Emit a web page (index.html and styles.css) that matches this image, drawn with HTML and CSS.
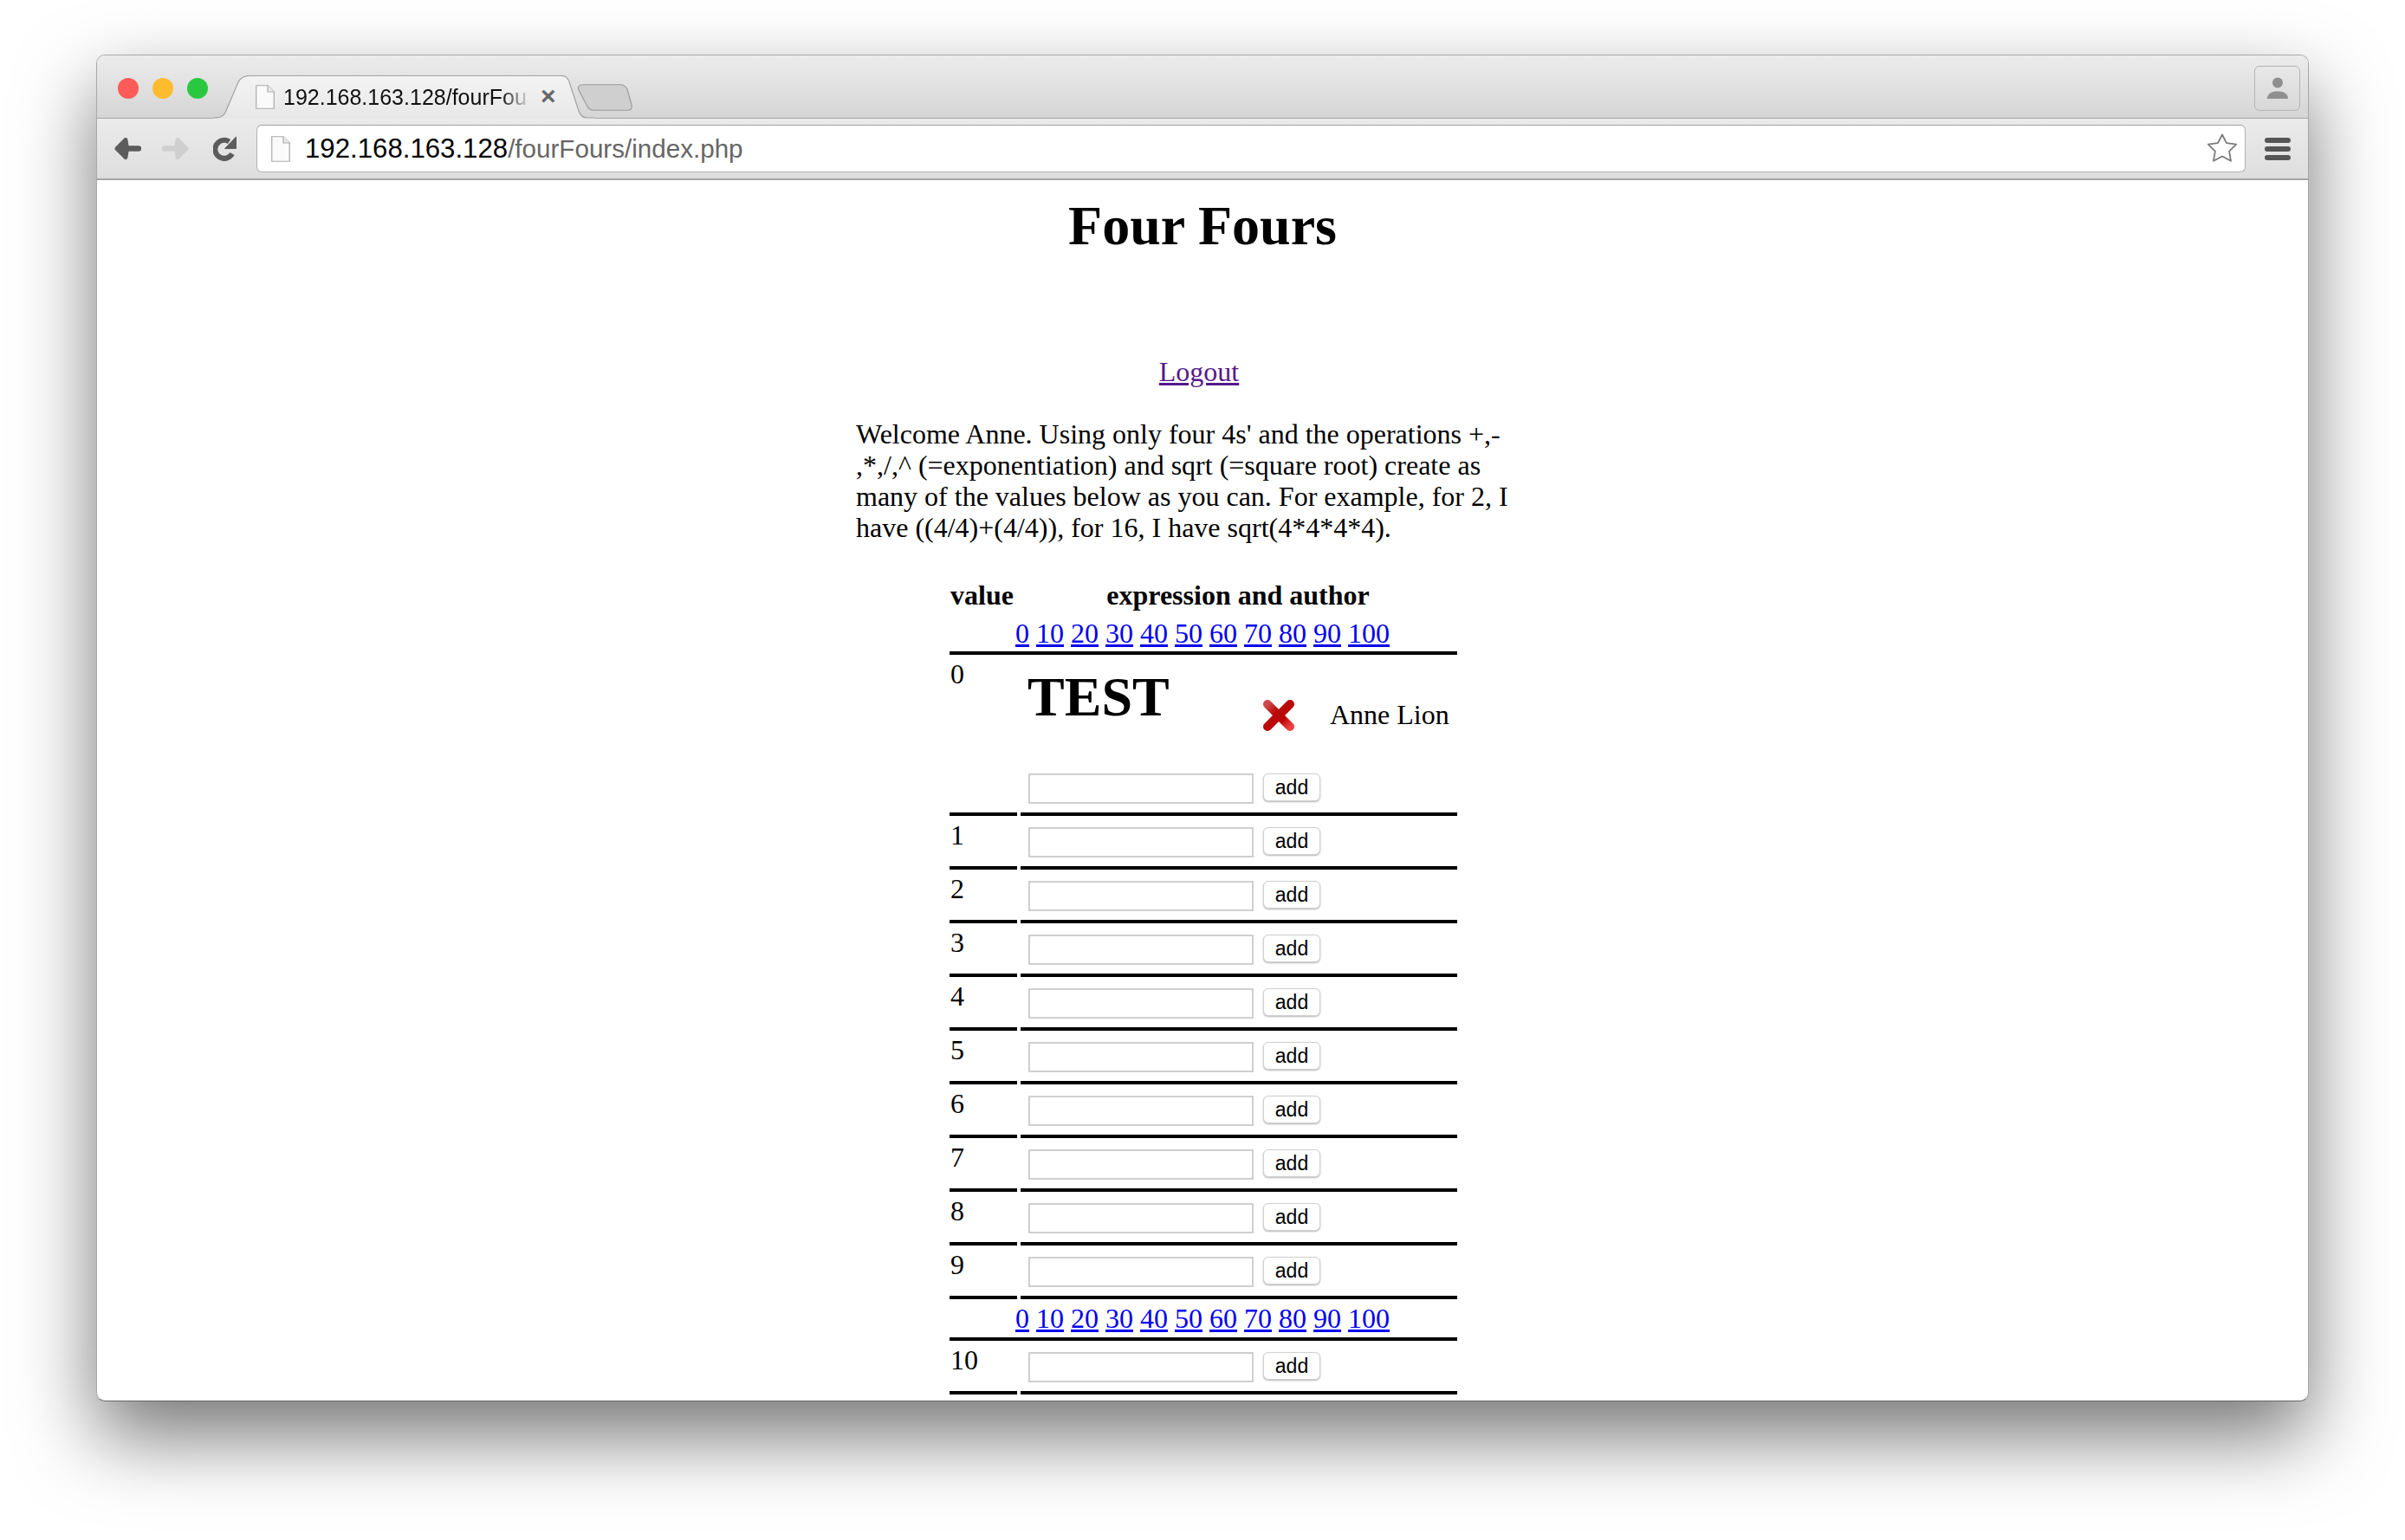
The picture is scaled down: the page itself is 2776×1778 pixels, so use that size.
FILE: index.html
```html
<!DOCTYPE html>
<html lang="en">
<head>
  <meta charset="UTF-8">
  <title>Four Fours</title>
  <link rel="stylesheet" href="styles.css">
</head>
<body>

<div class="window">

  <!-- Tab strip -->
  <div class="tabstrip">
    <div class="lights">
      <span class="light light-red"></span>
      <span class="light light-yellow"></span>
      <span class="light light-green"></span>
    </div>
    <div class="tab">
      <svg class="tab-shape" width="440" height="50" viewBox="0 0 440 50">
        <defs>
          <linearGradient id="tabFill" x1="0" y1="0" x2="0" y2="1">
            <stop offset="0" stop-color="#f3f3f3"/>
            <stop offset="1" stop-color="#e8e8e8"/>
          </linearGradient>
        </defs>
        <path d="M0 49C9 49 12 47 14 43L29 8C32 2 36 .5 42 .5L402 .5C407 .5 410 3 411.500 9L422 41C424 47 427 49 432 49L440 49L440 50L0 50Z" fill="url(#tabFill)"/>
        <path d="M0 49C9 49 12 47 14 43L29 8C32 2 36 .5 42 .5L402 .5C407 .5 410 3 411.500 9L422 41C424 47 427 49 432 49L440 49" fill="none" stroke="#a2a2a2" stroke-width="1.200"/>
      </svg>
      <svg class="page-icon" width="22" height="28" viewBox="0 0 22 28">
        <path d="M.75.75H14L21.25 8V27.25H.75Z" fill="#fafafa" stroke="#aaa" stroke-width="1.200"/>
        <path d="M14 .75V8H21.25" fill="#ececec" stroke="#aaa" stroke-width="1.200"/>
      </svg>
      <span class="tab-title">192.168.163.128/fourFou</span>
      <span class="tab-close">&#215;</span>
    </div>
    <svg class="new-tab" width="64" height="31" viewBox="0 0 64 31">
      <path d="M7 .75H50C54 .75 56 2 58 6L63 24C64 28 62 30.250 59 30.250H19C15 30.250 13 28 11.500 25L2 7C.5 3 2.500 .75 7 .75Z" fill="#cfcfcf" stroke="#9c9c9c" stroke-width="1.200"/>
    </svg>
    <div class="profile">
      <svg width="26" height="26" viewBox="0 0 26 26">
        <circle cx="13" cy="6.500" r="6" fill="#8f8f8f"/>
        <path d="M1 25C1 19 6 16.500 13 16.500C20 16.500 25 19 25 25Z" fill="#8f8f8f"/>
      </svg>
    </div>
  </div>

  <!-- Toolbar -->
  <div class="toolbar">
    <svg class="nav-icon" width="31" height="27" viewBox="0 0 31 27">
      <path d="M13 3.500L3 13.500L13 23.500L14.500 13.500Z" fill="#5c5c5c" stroke="#5c5c5c" stroke-width="5" stroke-linejoin="round"/>
      <path d="M10 13.500H28" fill="none" stroke="#5c5c5c" stroke-width="6.500" stroke-linecap="round"/>
    </svg>
    <svg class="nav-icon fwd" width="31" height="27" viewBox="0 0 31 27">
      <path d="M18 3.500L28 13.500L18 23.500L16.500 13.500Z" fill="#cfcfcf" stroke="#cfcfcf" stroke-width="5" stroke-linejoin="round"/>
      <path d="M21 13.500H3" fill="none" stroke="#cfcfcf" stroke-width="6.500" stroke-linecap="round"/>
    </svg>
    <svg class="nav-icon reload" width="27" height="29" viewBox="0 0 27 29">
      <path d="M22 20.500A10.500 10.500 0 1 1 18.500 6.500" fill="none" stroke="#5c5c5c" stroke-width="6" stroke-linecap="butt"/>
      <path d="M13.500 14.500H26.500V1Z" fill="#5c5c5c" stroke="#5c5c5c" stroke-width="1" stroke-linejoin="round"/>
    </svg>
    <div class="omnibox">
      <svg class="page-icon" width="22" height="30" viewBox="0 0 22 30">
        <path d="M.75.75H14L21.25 8V29.25H.75Z" fill="#fafafa" stroke="#aaa" stroke-width="1.200"/>
        <path d="M14 .75V8H21.25" fill="#ececec" stroke="#aaa" stroke-width="1.200"/>
      </svg>
      <span class="url"><span class="url-host">192.168.163.128</span>/fourFours/index.php</span>
      <svg class="star" width="36" height="36" viewBox="0 0 36 36">
        <path d="M18 1.500L23 11.100L34.200 12.700L26.100 20.600L28 31.800L18 26.500L8 31.800L9.900 20.600L1.800 12.700L13 11.100Z" fill="#fff" stroke="#7a7a7a" stroke-width="1.800" stroke-linejoin="round"/>
      </svg>
    </div>
    <div class="menu-icon"><span></span><span></span><span></span></div>
  </div>

  <!-- Page content -->
  <div class="page">
    <h1>Four Fours</h1>
    <p class="logout"><a href="#" class="visited">Logout</a></p>
    <p class="intro">Welcome Anne. Using only four 4s' and the operations +,-<wbr>,*,/,^ (=exponentiation) and sqrt (=square root) create as many of the values below as you can. For example, for 2, I have ((4/4)+(4/4)), for 16, I have sqrt(4*4*4*4).</p>

    <table class="scores">
      <colgroup>
        <col class="col-value">
        <col class="col-expr">
      </colgroup>
      <thead>
        <tr>
          <th class="head-value">value</th>
          <th class="head-expr">expression and author</th>
        </tr>
      </thead>
      <tbody>
        <tr>
          <td colspan="2" class="jump jump-top"><a href="#">0</a> <a href="#">10</a> <a href="#">20</a> <a href="#">30</a> <a href="#">40</a> <a href="#">50</a> <a href="#">60</a> <a href="#">70</a> <a href="#">80</a> <a href="#">90</a> <a href="#">100</a></td>
        </tr>
        <tr>
          <td class="num num-first">0</td>
          <td class="expr">
            <div class="entry">
              <h1 class="entry-text">TEST</h1>
              <svg class="del-icon" width="36" height="36" viewBox="0 0 36 36">
                <defs>
                  <linearGradient id="delFill" x1="0" y1="0" x2="1" y2="1">
                    <stop offset="0" stop-color="#cf4a4a"/>
                    <stop offset=".35" stop-color="#b80a0a"/>
                    <stop offset=".7" stop-color="#bb0505"/>
                    <stop offset="1" stop-color="#ec4040"/>
                  </linearGradient>
                </defs>
                <path d="M5 5L31 31M31 5L5 31" fill="none" stroke="url(#delFill)" stroke-width="10" stroke-linecap="round"/>
              </svg>
              <span class="author">Anne Lion</span>
            </div>
            <div class="add-form"><input type="text"><button>add</button></div>
          </td>
        </tr>
        <tr><td class="num">1</td><td class="expr"><div class="add-form"><input type="text"><button>add</button></div></td></tr>
        <tr><td class="num">2</td><td class="expr"><div class="add-form"><input type="text"><button>add</button></div></td></tr>
        <tr><td class="num">3</td><td class="expr"><div class="add-form"><input type="text"><button>add</button></div></td></tr>
        <tr><td class="num">4</td><td class="expr"><div class="add-form"><input type="text"><button>add</button></div></td></tr>
        <tr><td class="num">5</td><td class="expr"><div class="add-form"><input type="text"><button>add</button></div></td></tr>
        <tr><td class="num">6</td><td class="expr"><div class="add-form"><input type="text"><button>add</button></div></td></tr>
        <tr><td class="num">7</td><td class="expr"><div class="add-form"><input type="text"><button>add</button></div></td></tr>
        <tr><td class="num">8</td><td class="expr"><div class="add-form"><input type="text"><button>add</button></div></td></tr>
        <tr><td class="num">9</td><td class="expr"><div class="add-form"><input type="text"><button>add</button></div></td></tr>
        <tr>
          <td colspan="2" class="jump"><a href="#">0</a> <a href="#">10</a> <a href="#">20</a> <a href="#">30</a> <a href="#">40</a> <a href="#">50</a> <a href="#">60</a> <a href="#">70</a> <a href="#">80</a> <a href="#">90</a> <a href="#">100</a></td>
        </tr>
        <tr><td class="num">10</td><td class="expr"><div class="add-form"><input type="text"><button>add</button></div></td></tr>
      </tbody>
    </table>
  </div>
</div>

</body>
</html>
```

FILE: styles.css
```css
html, body {
  margin: 0;
  padding: 0;
  height: 100%;
  background-color: #fff;
  overflow: hidden;
}

/* Browser window on the desktop */
.window {
  box-sizing: border-box;
  width: 2554px;
  height: 1555px;
  margin: 63px 0 0 111px;
  background-color: #fff;
  border: 1px solid #a8a8a8;
  border-bottom-color: #666;
  border-radius: 10px;
  box-shadow: 0 40px 90px rgba(0, 0, 0, 0.54);
  overflow: hidden;
  font-family: "Liberation Sans", Arial, sans-serif;
}

/* Tab strip */
.tabstrip {
  box-sizing: border-box;
  display: flex;
  align-items: flex-start;
  height: 73px;
  padding: 0 8px 0 24px;
  background: linear-gradient(#ececec, #d5d5d5);
  border-bottom: 1px solid #a6a6a6;
}

.lights {
  display: flex;
  gap: 16px;
  margin-top: 26px;
}

.light {
  width: 24px;
  height: 24px;
  border-radius: 50%;
}

.light-red { background-color: #fc5b57; }
.light-yellow { background-color: #febb2e; }
.light-green { background-color: #2ac840; }

.tab {
  position: relative;
  z-index: 1;
  flex: none;
  display: flex;
  align-items: center;
  width: 440px;
  height: 50px;
  margin: 23px 0 0 6px;
  padding-left: 49px;
  box-sizing: border-box;
}

.tab-shape {
  position: absolute;
  top: 0;
  left: 0;
}

.tab .page-icon {
  position: relative;
  flex: none;
}

.tab-title {
  position: relative;
  width: 286px;
  margin-left: 10px;
  margin-top: -1px;
  font-size: 25px;
  line-height: 30px;
  white-space: nowrap;
  color: #111;
  -webkit-mask-image: linear-gradient(to right, #000 88%, transparent 100%);
  mask-image: linear-gradient(to right, #000 88%, transparent 100%);
}

.tab-close {
  position: relative;
  margin-left: 11px;
  margin-top: -2px;
  font-size: 30px;
  line-height: 30px;
  font-weight: bold;
  color: #666;
}

.new-tab {
  flex: none;
  margin: 33px 0 0 -20px;
}

.profile {
  box-sizing: border-box;
  display: flex;
  align-items: center;
  justify-content: center;
  width: 53px;
  height: 52px;
  margin: 12px 1px 0 auto;
  border: 1px solid #b4b4b4;
  border-radius: 6px;
}

/* Toolbar */
.toolbar {
  box-sizing: border-box;
  display: flex;
  align-items: center;
  height: 71px;
  padding: 0 20px;
  background: linear-gradient(#ebebeb, #dedede);
  border-bottom: 2px solid #a4a4a4;
}

.nav-icon { flex: none; }
.nav-icon.fwd { margin-left: 24px; }
.nav-icon.reload { margin-left: 28px; }

.omnibox {
  box-sizing: border-box;
  flex: 1;
  display: flex;
  align-items: center;
  height: 55px;
  margin-left: 23px;
  padding: 0 8px 0 16px;
  background-color: #fff;
  border: 1px solid #b2b2b2;
  border-top-color: #a0a0a0;
  border-radius: 6px;
}

.url {
  margin-left: 17px;
  font-size: 29.6px;
  white-space: nowrap;
  color: #666;
}

.url-host {
  font-size: 31.2px;
  color: #000;
}

.star { margin-left: auto; }

.menu-icon {
  display: flex;
  flex-direction: column;
  gap: 4px;
  width: 30px;
  margin-left: 22px;
}

.menu-icon span {
  height: 6px;
  border-radius: 3px;
  background-color: #555;
}

/* Page content */
.page {
  font-family: "Liberation Serif", "Times New Roman", serif;
  font-size: 32px;
  line-height: 36px;
  color: #000;
}

h1 {
  margin: 16px 0 0;
  font-size: 64px;
  line-height: 74px;
  text-align: center;
}

.logout {
  margin: 113px 0 0;
  padding-right: 8px;
  text-align: center;
}

a { color: #00e; }
a.visited { color: #551a8b; }

.intro {
  width: 770px;
  margin: 36px 0 0 876px;
}

/* Values table */
.scores {
  table-layout: fixed;
  width: 594px;
  margin: 42px 0 0 980px;
  border-collapse: separate;
  border-spacing: 4px 0;
}

.col-value { width: 78px; }

.scores th {
  padding: 0;
  text-align: center;
}

.scores th.head-value {
  padding-left: 1px;
  text-align: left;
}

.scores th.head-expr { padding-right: 2px; }

.scores td { padding: 0; }

.jump {
  padding: 4px 2px 4px 0 !important;
  text-align: center;
  border-bottom: 4px solid #000;
}

.jump-top { padding-top: 8px !important; padding-bottom: 3px !important; }

.num {
  vertical-align: top;
  padding: 4px 0 0 1px !important;
  border-bottom: 4px solid #000;
}

.expr {
  padding-left: 8px !important;
  border-bottom: 4px solid #000;
}

.entry {
  display: grid;
  grid-template-columns: 272px 77px auto;
  height: 124px;
}

.entry-text {
  margin: 12px 0 0;
  text-align: left;
}

.del-icon { margin-top: 52px; }

.author {
  margin-top: 51px;
  white-space: nowrap;
}

.add-form {
  display: flex;
  align-items: flex-start;
  gap: 11px;
  padding: 13px 0 10px 1px;
}

.add-form input {
  box-sizing: border-box;
  width: 260px;
  height: 35px;
  margin: 0;
  padding: 0 4px;
  background-color: #fff;
  border: 2px solid #cfcfcf;
}

.add-form button {
  box-sizing: border-box;
  width: 66px;
  height: 32px;
  padding: 0;
  font-family: "Liberation Sans", Arial, sans-serif;
  font-size: 23px;
  line-height: 28px;
  color: #000;
  background-color: #fff;
  border: 1px solid #d0d0d0;
  border-radius: 6px;
  box-shadow: 0 1px 2px rgba(0, 0, 0, 0.3);
}
```
